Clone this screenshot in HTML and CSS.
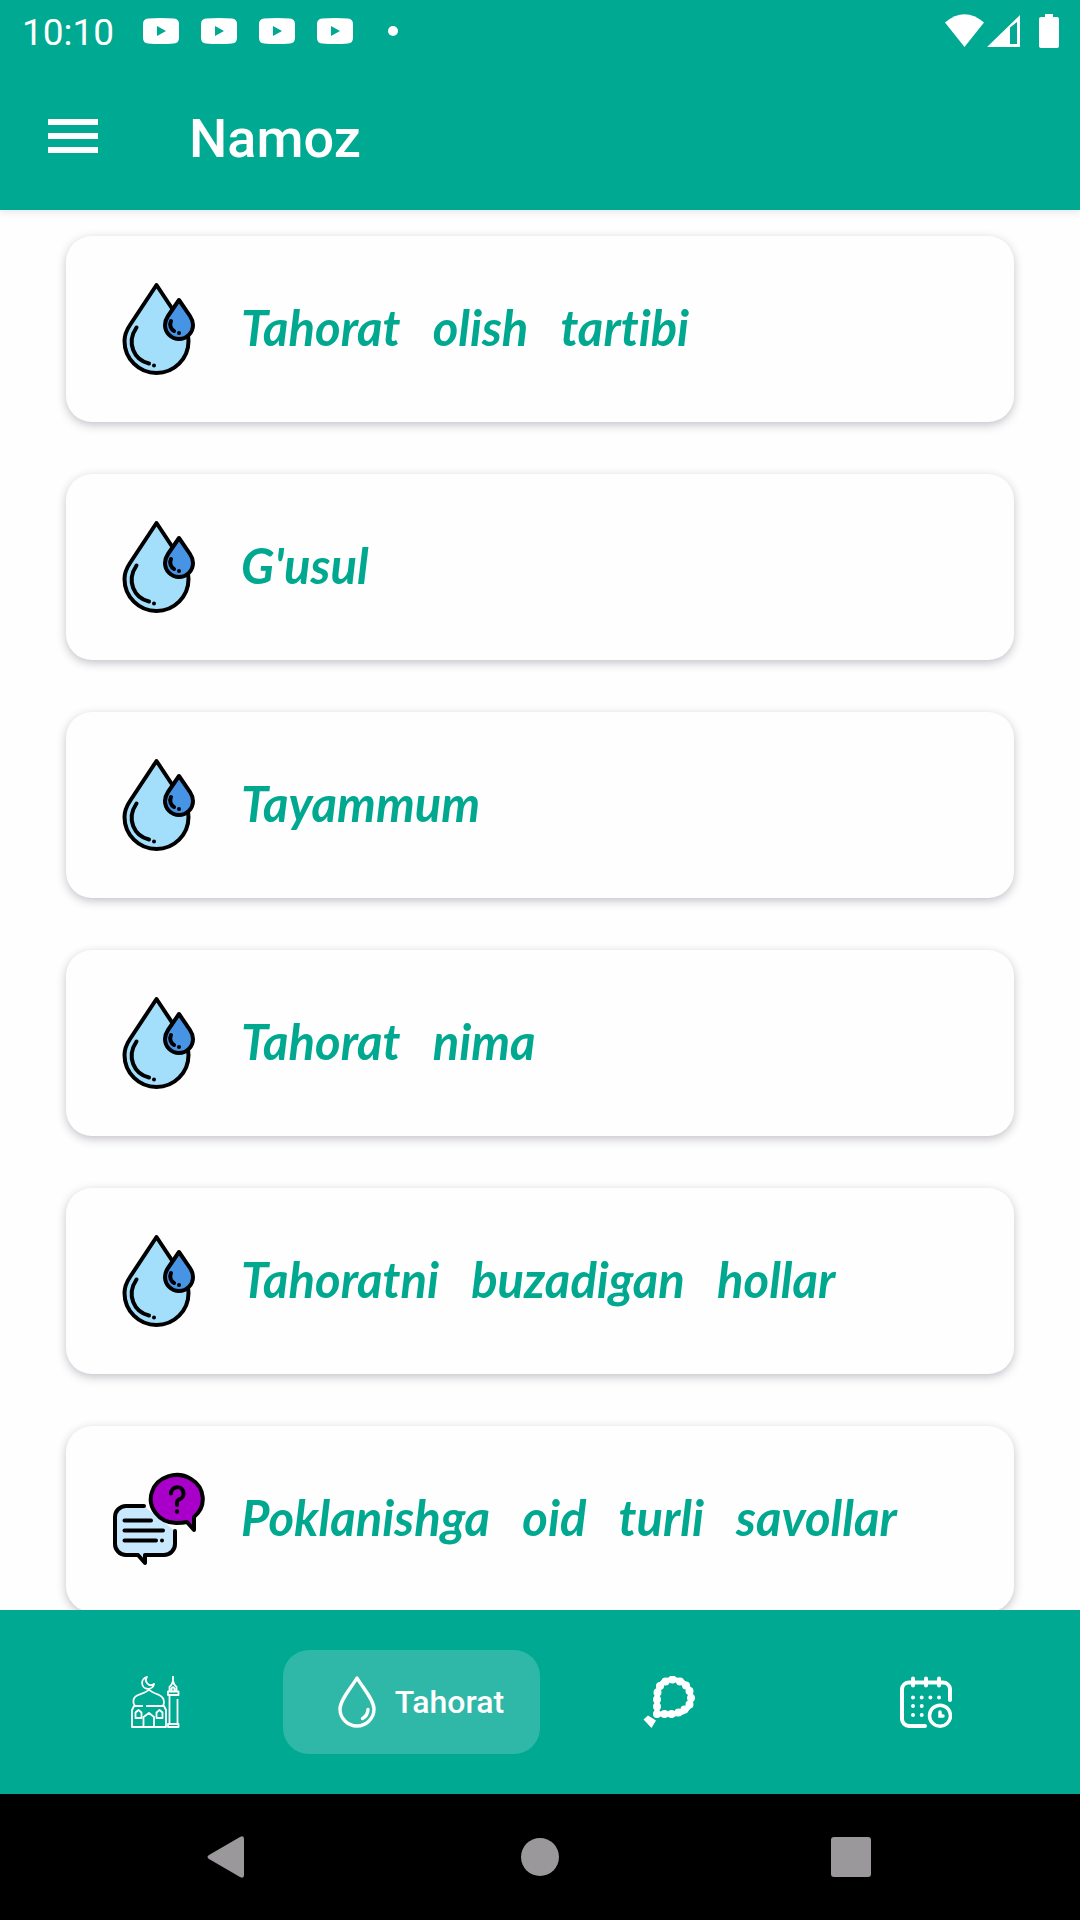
FILE: index.html
```html
<!DOCTYPE html>
<html lang="uz">

<head>
    <meta charset="UTF-8">
    <meta name="viewport" content="width=device-width, initial-scale=1.0">
    <title>Namoz</title>
    <link rel="stylesheet" href="styles.css">
</head>

<body>
    <svg class="sprite" aria-hidden="true">
        <symbol id="play" viewBox="0 0 36 26">
            <path fill="#fff" fill-rule="evenodd" d="M5 .5Q18-.5 31 .5Q36 1 36 6V20Q36 25 31 25.500Q18 26.500 5 25.500Q0 25 0 20V6Q0 1 5 .5ZM14 8V18L23 13Z" />
        </symbol>
        <symbol id="drops" viewBox="0 0 94 94">
            <g stroke="#000" stroke-width="4" stroke-linejoin="round" stroke-linecap="round">
                <path fill="#a3dffb" d="M44.500 3L18 43C14 49 12.500 54 12.500 59A32 32 0 0 0 76.500 59C76.500 54 75 49 71 43Z" />
                <path fill="#4793e4" d="M67 18L56 34C54 37 53 40 53 43A14 14 0 0 0 81 43C81 40 80 37 78 34Z" />
                <path fill="none" d="M24.500 45.500C14 61 22 78 37 81.500M59 39C57 43 59 47.500 62 49" />
            </g>
            <circle cx="42" cy="83.500" r="2" />
            <circle cx="67" cy="51" r="2" />
        </symbol>
        <symbol id="chat" viewBox="0 0 94 94">
            <g stroke="#000" stroke-width="4" stroke-linejoin="round" stroke-linecap="round">
                <path fill="#c8e9fd" d="M32 34H14A11 11 0 0 0 3 45V72A11 11 0 0 0 14 83H26L33 91V83H52A11 11 0 0 0 63 72V59" />
                <path fill="none" d="M12.500 48.500H39M12.500 58.500H51M12.500 68.500H44" />
                <path fill="#a800c8" d="M82 45V58L75 50C71 51 67 51 64 51A26 24 0 1 1 82 45Z" />
                <path fill="none" d="M59 21.500A6.300 6.300 0 1 1 67 27.500Q65 28.500 65 30.500V33" />
            </g>
            <circle cx="50" cy="68.500" r="2" />
            <circle cx="65" cy="39.500" r="2.200" />
        </symbol>
    </svg>

    <header class="header">
        <div class="status">
            <span class="time">10:10</span>
            <div class="notifications">
                <svg class="play"><use href="#play" /></svg>
                <svg class="play"><use href="#play" /></svg>
                <svg class="play"><use href="#play" /></svg>
                <svg class="play"><use href="#play" /></svg>
            </div>
            <span class="dot"></span>
            <svg class="signals" viewBox="0 0 114 34">
                <g fill="#fff">
                    <path d="M0 8.500Q19.500-8 39 8.500L19.500 33Z" />
                    <path fill-rule="evenodd" d="M75 1V33H42ZM65 13.500V30H72V8Z" />
                    <path d="M100 0H108V3H112Q114 3 114 5V32Q114 34 112 34H96Q94 34 94 32V5Q94 3 96 3H100Z" />
                </g>
            </svg>
        </div>
        <div class="toolbar">
            <button class="menu-btn" aria-label="Menu">
                <span></span>
                <span></span>
                <span></span>
            </button>
            <h1 class="title">Namoz</h1>
        </div>
    </header>

    <main class="list">
        <a href="#" class="card">
            <svg class="card-icon"><use href="#drops" /></svg>
            <span class="card-text">Tahorat   olish   tartibi</span>
        </a>
        <a href="#" class="card">
            <svg class="card-icon"><use href="#drops" /></svg>
            <span class="card-text">G'usul</span>
        </a>
        <a href="#" class="card">
            <svg class="card-icon"><use href="#drops" /></svg>
            <span class="card-text">Tayammum</span>
        </a>
        <a href="#" class="card">
            <svg class="card-icon"><use href="#drops" /></svg>
            <span class="card-text">Tahorat   nima</span>
        </a>
        <a href="#" class="card">
            <svg class="card-icon"><use href="#drops" /></svg>
            <span class="card-text">Tahoratni   buzadigan   hollar</span>
        </a>
        <a href="#" class="card">
            <svg class="card-icon"><use href="#chat" /></svg>
            <span class="card-text">Poklanishga   oid   turli   savollar</span>
        </a>
    </main>

    <nav class="tabs">
        <a href="#" class="tab" aria-label="Namoz">
            <svg class="tab-icon" viewBox="0 0 52 52" fill="none" stroke="#fff" stroke-width="1.800" stroke-linejoin="round">
                <path d="M18 1A6 6 0 1 0 25 8A5 5 0 0 1 18 1ZM20 12V14" />
                <path d="M6 30C3 26 4 21 9 19C14 17 18 16 20 13.500C22 16 25 17 30 19C35 21 36 26 34 30" />
                <path d="M14 30H5L3 34V51H37V34L35 30H17" />
                <path d="M14.500 51V41L20 37L25 41V51M6.500 42V36.500L9.500 34L12.500 36.500V42ZM27.500 42V36.500L30.500 34L33.500 36.500V42Z" />
                <path d="M44 0V5M40.500 15.500V11Q43 9 44 5Q45 9 47.500 11V15.500M42.500 15V12.500Q44 10 45.500 12.500V15M39 15.500H49.500V19H39ZM40.500 19V48M48.500 23V48M39 48H49.500V51H39Z" />
            </svg>
        </a>
        <a href="#" class="tab active">
            <svg class="tab-icon" viewBox="0 0 52 52" fill="none" stroke="#fff" stroke-width="3.400" stroke-linejoin="round" stroke-linecap="round">
                <path d="M26 2C20 12 9 24 9 33A17 17 0 0 0 43 33C43 24 32 12 26 2Z" />
                <path d="M37 33.500Q36.500 40 31.500 42.500" />
            </svg>
            <span>Tahorat</span>
        </a>
        <a href="#" class="tab" aria-label="Zikr">
            <svg class="tab-icon" viewBox="0 0 52 52" fill="none" stroke="#fff" stroke-linecap="round">
                <path stroke-width="5" d="M29.500 3.500C18 4 14 12 14 22V38H29C42 38 48 31 48 22C48 12 41 3.500 29.500 3.500Z" />
                <path stroke-width="8" d="M29.500 3.500h0M22.500 5.500h0M17 10h0M14.500 16.500h0M14 23.500h0M14 30.500h0M14 38h0M21.500 38h0M28.500 38h0M35.500 36.500h0M41.500 33.500h0M46.500 28.500h0M48 22h0M46.500 15h0M43 9.500h0M37 5.500h0" />
                <path fill="#fff" stroke="none" d="M.5 43.500L5 39.500L13 44.500L8.500 52Z" />
            </svg>
        </a>
        <a href="#" class="tab" aria-label="Taqvim">
            <svg class="tab-icon" viewBox="0 0 52 52" fill="none" stroke="#fff" stroke-width="4" stroke-linecap="round">
                <path d="M25 50H9A7 7 0 0 1 2 43V13A7 7 0 0 1 9 6.500H43A7 7 0 0 1 50 13V24M13 2.500V9.500M26 2.500V9.500M39 2.500V9.500" />
                <path d="M13 21.500h0M21.700 21.500h0M30.400 21.500h0M39 21.500h0M13 30h0M21.700 30h0M13 39h0M21.700 39h0" />
                <circle cx="40" cy="39.700" r="10.500" stroke-width="3.500" />
                <path stroke-width="3.500" d="M40 36V40H43" />
            </svg>
        </a>
    </nav>

    <div class="system-nav">
        <button aria-label="Back">
            <svg viewBox="0 0 42 42"><path d="M2 19L33 1Q37-1 37 3V39Q37 43 33 41L2 23Q-1 21 2 19Z" /></svg>
        </button>
        <button aria-label="Home">
            <svg viewBox="0 0 42 42"><circle cx="21" cy="21" r="19" /></svg>
        </button>
        <button aria-label="Recent apps">
            <svg viewBox="0 0 42 42"><rect x="0" y="1" width="40" height="40" rx="3" /></svg>
        </button>
    </div>
</body>

</html>
```
FILE: styles.css
```css
* {
    margin: 0;
    padding: 0;
    box-sizing: border-box;
}

body {
    height: 100vh;
    display: flex;
    flex-direction: column;
    font-family: Roboto, sans-serif;
    background-color: #fefefe;
}

a {
    color: inherit;
    text-decoration: none;
}

button {
    border: none;
    background-color: transparent;
}

svg {
    display: block;
    flex-shrink: 0;
}

.sprite {
    position: absolute;
    width: 0;
    height: 0;
}

.header {
    flex-shrink: 0;
    position: relative;
    color: white;
    background-color: #00a991;
    box-shadow: 0 1px 8px rgba(60, 40, 70, 0.15);
}

.status {
    height: 62px;
    padding: 0 21px 0 22px;
    display: flex;
    align-items: center;
}

.time {
    width: 121px;
    padding-top: 4px;
    font-size: 37px;
    line-height: 60px;
}

.notifications {
    display: flex;
    gap: 22px;
}

.play {
    width: 36px;
    height: 26px;
}

.dot {
    width: 10px;
    height: 10px;
    margin-left: 35px;
    border-radius: 50%;
    background-color: white;
}

.signals {
    width: 114px;
    height: 34px;
    margin-left: auto;
}

.toolbar {
    height: 148px;
    padding: 0 48px;
    display: flex;
    align-items: center;
    gap: 91px;
}

.menu-btn {
    width: 50px;
    display: flex;
    flex-direction: column;
    gap: 8px;
}

.menu-btn span {
    height: 6px;
    background-color: white;
}

.title {
    padding-top: 6px;
    font-size: 54px;
    font-weight: 500;
    line-height: 64px;
}

.list {
    flex: 1;
    min-height: 0;
    padding: 26px 66px 0;
    display: flex;
    flex-direction: column;
    gap: 52px;
    overflow: hidden;
}

.card {
    flex-shrink: 0;
    height: 186px;
    padding: 0 46px;
    display: flex;
    align-items: center;
    gap: 35px;
    border-radius: 26px;
    color: #00a88f;
    background-color: #fefefe;
    box-shadow: 0 3px 10px rgba(50, 35, 60, 0.28);
}

.card-icon {
    width: 94px;
    height: 94px;
}

.card-text {
    padding-bottom: 4px;
    font-family: Lato, sans-serif;
    font-size: 49px;
    font-weight: 700;
    font-style: italic;
    font-variant-ligatures: none;
    white-space: pre;
}

.tabs {
    flex-shrink: 0;
    padding: 40px 26px;
    display: grid;
    grid-template-columns: repeat(4, 1fr);
    background-color: #00a991;
}

.tab {
    height: 104px;
    display: flex;
    align-items: center;
    justify-content: center;
    gap: 12px;
    border-radius: 26px;
    color: white;
    font-size: 32px;
    font-weight: 500;
}

.tab.active {
    padding-left: 12px;
    background-color: #2fb8a8;
}

.tab-icon {
    width: 52px;
    height: 52px;
}

.system-nav {
    flex-shrink: 0;
    height: 126px;
    padding: 0 72px;
    display: flex;
    background-color: black;
}

.system-nav button {
    flex: 1;
    display: flex;
    align-items: center;
    justify-content: center;
}

.system-nav svg {
    width: 42px;
    height: 42px;
    fill: #9b989b;
}
```
